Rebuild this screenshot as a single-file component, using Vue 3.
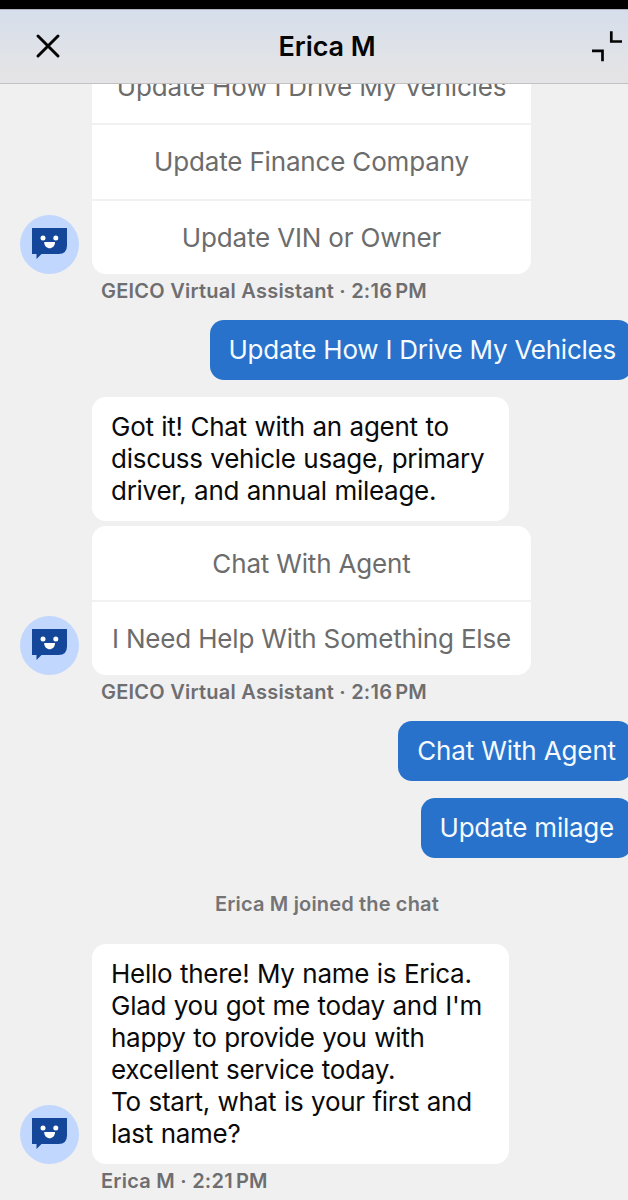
<template>
  <div class="chat">
    <header class="chat-header">
      <button class="header-btn" aria-label="Close">
        <svg width="26" height="26" viewBox="0 0 26 26">
          <path d="M3 3L23 23M23 3L3 23" fill="none" stroke="#050505" stroke-width="3" stroke-linecap="round" />
        </svg>
      </button>
      <h1 class="title">Erica M</h1>
      <button class="header-btn collapse" aria-label="Minimize">
        <svg width="32" height="32" viewBox="0 0 32 32">
          <path d="M21.300 1.200V11.500H32M2 20.800H12.500V31.200" fill="none" stroke="#050505" stroke-width="2.700" />
        </svg>
      </button>
    </header>

    <main class="thread">
      <template v-for="(item, index) in thread" :key="index">
        <section v-if="item.type === 'agent'" class="agent" :class="{ scrolled: index === 0 }">
          <div class="agent-row">
            <svg class="avatar" viewBox="0 0 59 59">
              <circle cx="29.5" cy="29.5" r="29.5" fill="#c1d7fd" />
              <path d="M12 13H47V30.5Q47 39 38.500 39H21.500L16.500 44V39H12Z" fill="#14479a" />
              <circle cx="23" cy="23" r="2.500" fill="#fff" />
              <circle cx="35.800" cy="23" r="2.500" fill="#fff" />
              <path d="M24.200 27H35C35 35.300 24.200 35.300 24.200 27Z" fill="#fff" />
            </svg>
            <div class="agent-content">
              <div v-if="item.lines" class="bubble">
                <p v-for="line in item.lines" :key="line">{{ line }}</p>
              </div>
              <div v-if="item.options" class="options">
                <button v-for="option in item.options" :key="option" class="option">{{ option }}</button>
              </div>
            </div>
          </div>
          <p class="meta">{{ item.sender }} · {{ item.time }}<span class="period">PM</span></p>
        </section>

        <div v-else-if="item.type === 'user'" class="user">{{ item.text }}</div>

        <p v-else class="notice">{{ item.text }}</p>
      </template>
    </main>
  </div>
</template>

<script setup>
  const thread = [
    {
      type: 'agent',
      options: ['Update How I Drive My Vehicles', 'Update Finance Company', 'Update VIN or Owner'],
      sender: 'GEICO Virtual Assistant',
      time: '2:16'
    },
    { type: 'user', text: 'Update How I Drive My Vehicles' },
    {
      type: 'agent',
      lines: ['Got it! Chat with an agent to', 'discuss vehicle usage, primary', 'driver, and annual mileage.'],
      options: ['Chat With Agent', 'I Need Help With Something Else'],
      sender: 'GEICO Virtual Assistant',
      time: '2:16'
    },
    { type: 'user', text: 'Chat With Agent' },
    { type: 'user', text: 'Update milage' },
    { type: 'notice', text: 'Erica M joined the chat' },
    {
      type: 'agent',
      lines: [
        'Hello there! My name is Erica.',
        "Glad you got me today and I'm",
        'happy to provide you with',
        'excellent service today.',
        'To start, what is your first and',
        'last name?'
      ],
      sender: 'Erica M',
      time: '2:21'
    }
  ];
</script>

<style>
  body {
    margin: 0;
    overflow: hidden;
  }
</style>

<style scoped>
  .chat {
    box-sizing: border-box;
    display: flex;
    flex-direction: column;
    width: 628px;
    height: 1200px;
    border-top: 9px solid #000;
    background: #f0f0f0;
    font-family: Inter, sans-serif;
    overflow: hidden;
  }

  p,
  h1 {
    margin: 0;
  }

  button {
    padding: 0;
    border: none;
    background: none;
    font: inherit;
  }

  .chat-header {
    box-sizing: border-box;
    flex: none;
    display: grid;
    grid-template-columns: 96px 1fr 70px;
    align-items: center;
    height: 75px;
    padding-bottom: 2px;
    border-top: 1px solid #aeb3bd;
    border-bottom: 1px solid #c1c1c2;
    background: linear-gradient(#d5deeb, #e4e4e6 85%);
  }

  .header-btn {
    display: flex;
    justify-content: center;
  }

  .collapse {
    justify-content: flex-end;
    padding-right: 6px;
  }

  .title {
    padding-top: 2px;
    font-size: 27px;
    font-weight: 600;
    line-height: 32px;
    text-align: center;
    letter-spacing: -0.1px;
    color: #050505;
  }

  .thread {
    flex: 1;
    min-height: 0;
    display: flex;
    flex-direction: column;
    overflow: hidden;
  }

  .agent {
    flex: none;
    margin-bottom: 13px;
  }

  /* the first card is partly scrolled under the header */
  .agent.scrolled {
    margin-top: -35px;
  }

  .scrolled .option + .option {
    height: 75.500px;
  }

  .agent-row {
    display: flex;
    align-items: flex-end;
    gap: 13px;
    padding-left: 20px;
  }

  .avatar {
    flex: none;
    width: 59px;
    height: 59px;
  }

  .agent-content {
    display: flex;
    flex-direction: column;
    gap: 5px;
  }

  .bubble {
    box-sizing: border-box;
    width: 417px;
    padding: 14px 19px;
    border-radius: 14px;
    background: #fff;
    font-size: 26px;
    line-height: 32px;
    letter-spacing: -0.27px;
    word-spacing: 0.6px;
    white-space: nowrap;
    color: #0a0a0a;
  }

  .options {
    display: flex;
    flex-direction: column;
    width: 439px;
    border-radius: 14px;
    background: #fff;
    overflow: hidden;
  }

  .option {
    height: 74px;
    font-size: 26px;
    letter-spacing: -0.17px;
    white-space: nowrap;
    color: #6c6c6c;
  }

  .option + .option {
    height: 75px;
    border-top: 2px solid #f1f1f1;
  }

  .meta {
    margin-top: 4px;
    padding-left: 101px;
    font-size: 20px;
    font-weight: 600;
    line-height: 26px;
    letter-spacing: 0.24px;
    color: #6e6e70;
  }

  .period {
    margin-left: 3px;
  }

  .user {
    flex: none;
    align-self: flex-end;
    box-sizing: border-box;
    height: 60px;
    margin: 3px -4px 17px 0;
    padding: 0 16px 0 19px;
    border-radius: 14px;
    background: #2872cb;
    font-size: 26px;
    line-height: 60px;
    letter-spacing: -0.24px;
    white-space: nowrap;
    color: #f5faff;
  }

  .agent + .user:has(+ .user) {
    letter-spacing: -0.13px;
  }

  .user + .user {
    margin-top: 0;
    padding-right: 18px;
  }

  .notice {
    margin: 16px 0 27px;
    padding-left: 26px;
    font-size: 20px;
    font-weight: 600;
    line-height: 26px;
    text-align: center;
    letter-spacing: 0.16px;
    color: #747476;
  }
</style>
